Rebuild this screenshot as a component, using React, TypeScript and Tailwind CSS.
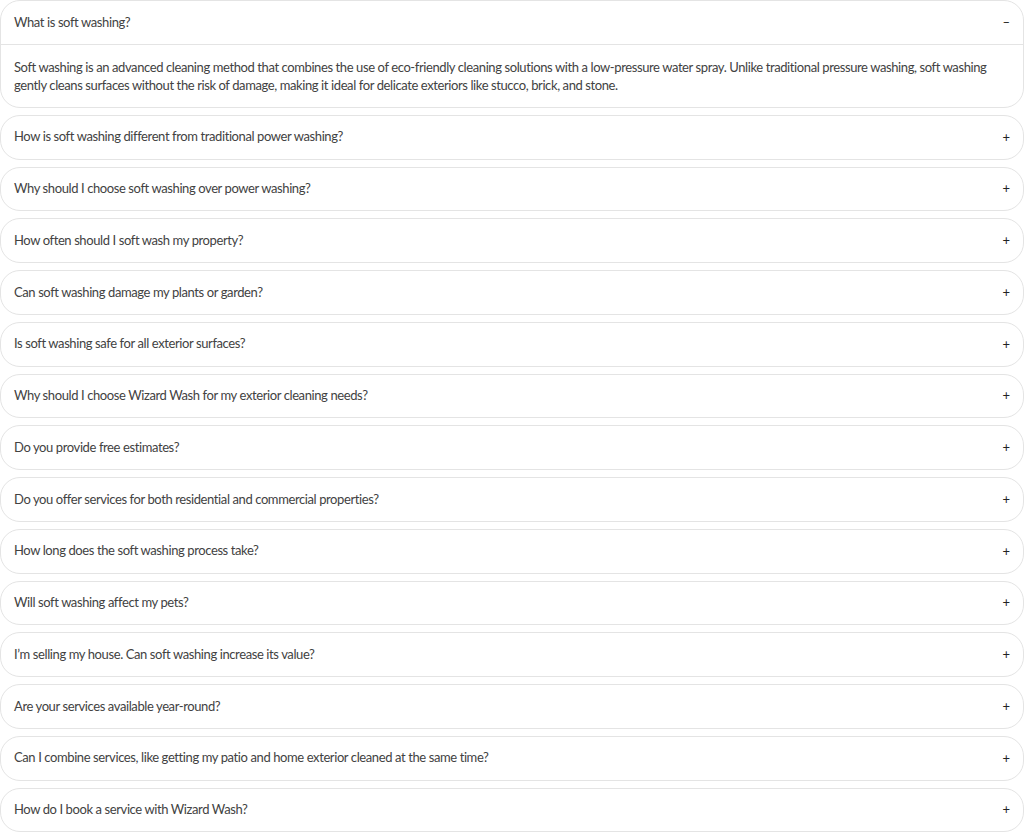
import { useState } from "react";

const faqs = [
  {
    q: "What is soft washing?",
    a: "Soft washing is an advanced cleaning method that combines the use of eco-friendly cleaning solutions with a low-pressure water spray. Unlike traditional pressure washing, soft washing gently cleans surfaces without the risk of damage, making it ideal for delicate exteriors like stucco, brick, and stone.",
  },
  { q: "How is soft washing different from traditional power washing?", a: "" },
  { q: "Why should I choose soft washing over power washing?", a: "" },
  { q: "How often should I soft wash my property?", a: "" },
  { q: "Can soft washing damage my plants or garden?", a: "" },
  { q: "Is soft washing safe for all exterior surfaces?", a: "" },
  { q: "Why should I choose Wizard Wash for my exterior cleaning needs?", a: "" },
  { q: "Do you provide free estimates?", a: "" },
  { q: "Do you offer services for both residential and commercial properties?", a: "" },
  { q: "How long does the soft washing process take?", a: "" },
  { q: "Will soft washing affect my pets?", a: "" },
  { q: "I\u2019m selling my house. Can soft washing increase its value?", a: "" },
  { q: "Are your services available year-round?", a: "" },
  { q: "Can I combine services, like getting my patio and home exterior cleaned at the same time?", a: "" },
  { q: "How do I book a service with Wizard Wash?", a: "" },
];

export default function App() {
  const [open, setOpen] = useState<number | null>(0);

  return (
    <div className="bg-white min-h-screen w-full font-['Lato',sans-serif] text-[#424242]">
      <div className="flex flex-col gap-[7px]">
        {faqs.map((item, i) => {
          const isOpen = open === i;
          return (
            <div key={i} className="border border-[#e4e4e4] rounded-[20px] bg-white overflow-hidden">
              <button
                onClick={() => setOpen(isOpen ? null : i)}
                className="w-full h-[42.75px] flex items-center justify-between pl-[13px] pr-[13px] text-left text-[13px] tracking-[-0.4px]"
              >
                <span>{item.q}</span>
                <span className="text-[#222] text-[13px] leading-none w-[8px] text-center">
                  {isOpen ? "\u2013" : "+"}
                </span>
              </button>
              {isOpen && (
                <div className="border-t border-[#e4e4e4] px-[13px] pt-[13px] pb-[13px] text-[13px] leading-[18px] tracking-[-0.4px]">
                  {item.a}
                </div>
              )}
            </div>
          );
        })}
      </div>
    </div>
  );
}
